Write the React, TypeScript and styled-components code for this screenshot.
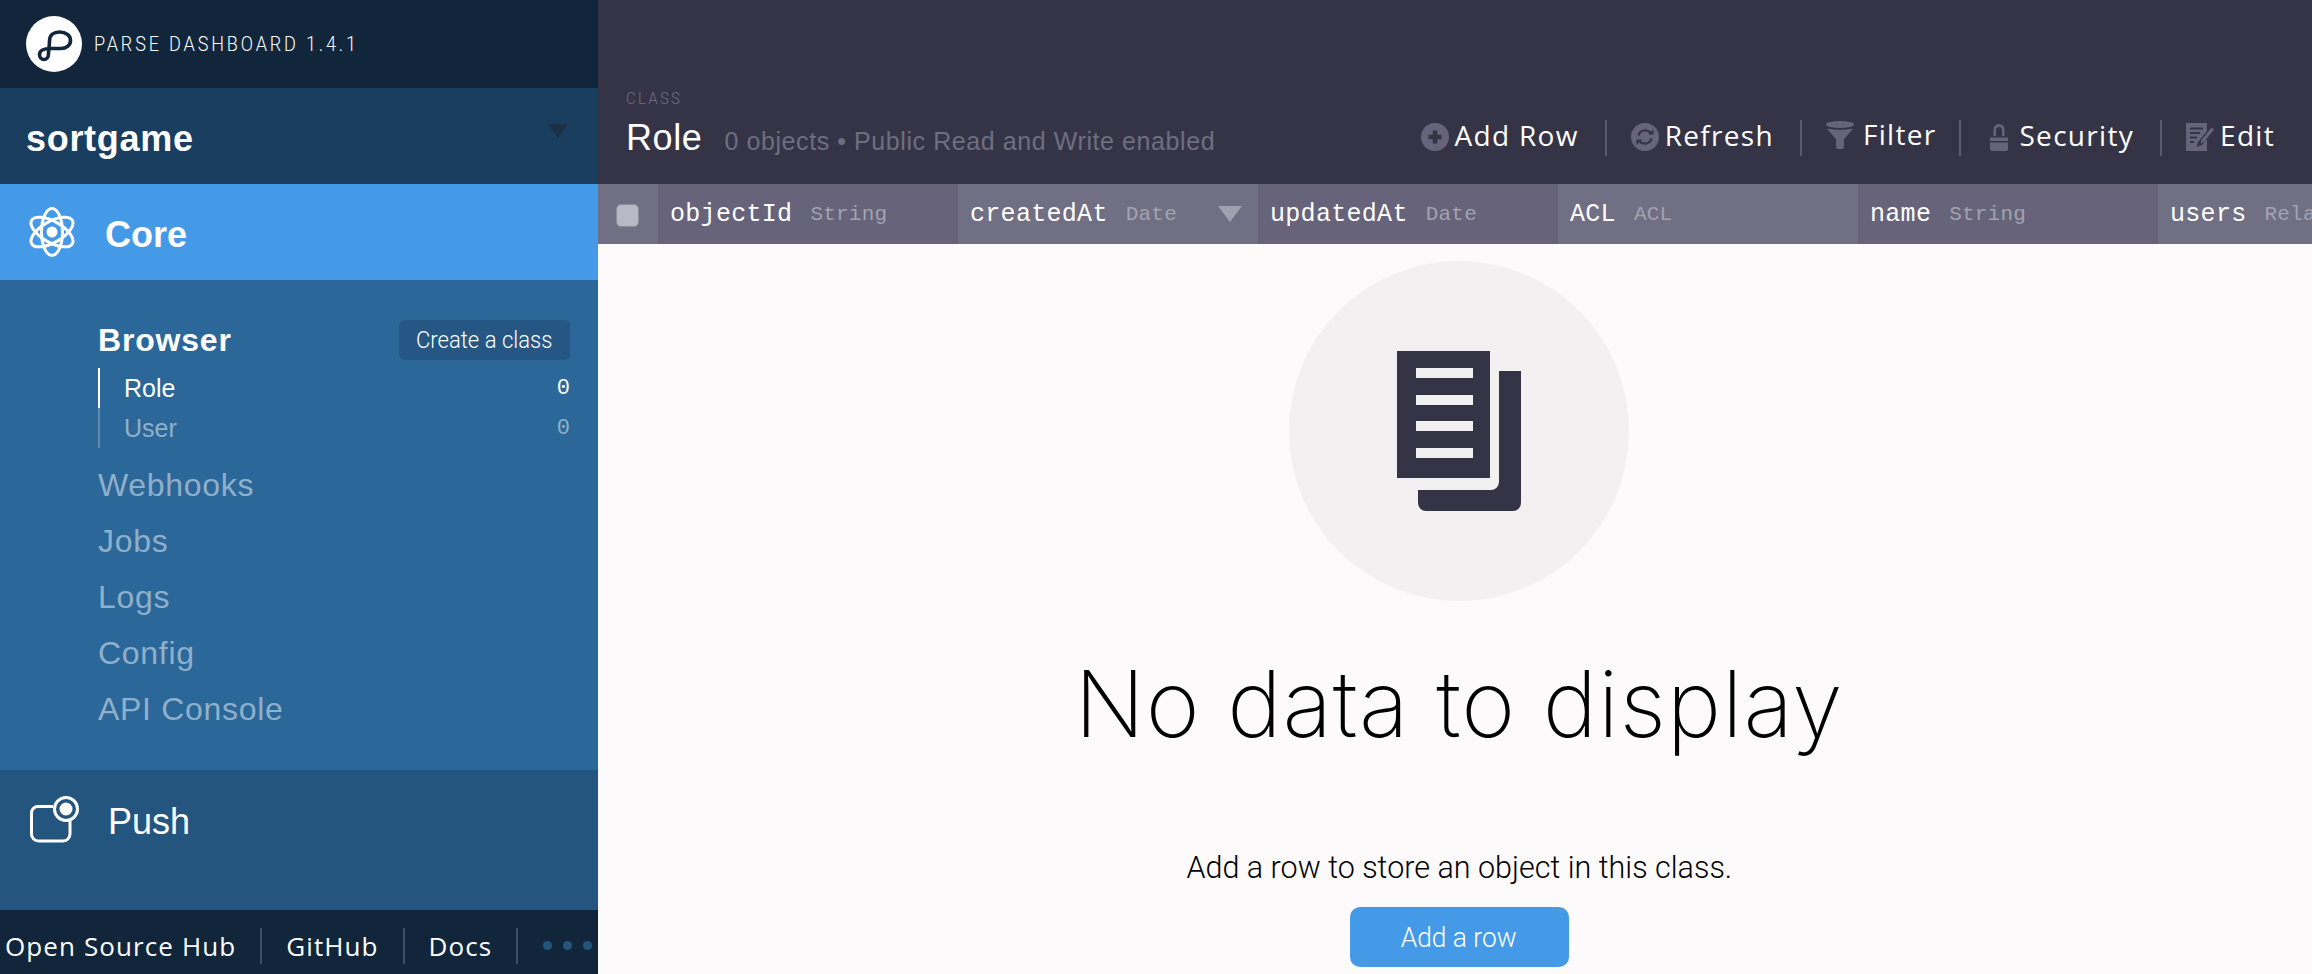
import React from 'react'
import styled, { createGlobalStyle } from 'styled-components'

const GlobalStyle = createGlobalStyle`
  html, body {
    margin: 0;
    padding: 0;
    height: 100%;
    overflow: hidden;
    background: #fcfafb;
  }
  * { box-sizing: border-box; }
`

const sans = `"Liberation Sans", Arial, sans-serif`
const din = `Roboto, "Liberation Sans", sans-serif`
const open = `"Open Sans", "Noto Sans", sans-serif`
const mono = `"Liberation Mono", monospace`

const Page = styled.div`
  display: flex;
  width: 2312px;
  height: 974px;
  overflow: hidden;
`

const Sidebar = styled.aside`
  width: 598px;
  flex-shrink: 0;
  display: flex;
  flex-direction: column;
  font-family: ${sans};
  color: #fff;
`

// the dashboard's DIN is narrower than anything installed
const Narrow = styled.span<{ $x: number; $origin?: string }>`
  display: inline-block;
  white-space: nowrap;
  transform: scaleX(${(p) => p.$x});
  transform-origin: ${(p) => p.$origin || 'center'};
`

const Brand = styled.div`
  height: 88px;
  background: #11263a;
  display: flex;
  align-items: center;
  padding: 0 0 0 26px;
  gap: 12px;
`

const BrandText = styled(Narrow)`
  font-family: ${din};
  font-weight: 300;
  font-size: 21px;
  letter-spacing: 3.3px;
`

const AppBar = styled.div`
  height: 96px;
  background: #1a3e60;
  display: flex;
  align-items: center;
  justify-content: space-between;
  padding: 0 30px 0 26px;
`

const AppName = styled.span`
  font-size: 36px;
  font-weight: 700;
  letter-spacing: 0.7px;
  padding-top: 5px;
`

const Caret = styled.div`
  width: 0;
  height: 0;
  border-left: 10px solid transparent;
  border-right: 10px solid transparent;
  border-top: 14px solid #1c3044;
  margin-bottom: 10px;
`

const Section = styled.div<{ $bg: string; $h: number }>`
  height: ${(p) => p.$h}px;
  background: ${(p) => p.$bg};
  display: flex;
  align-items: center;
  gap: 30px;
  padding-left: 29px;
  font-size: 36px;
`

const PushSection = styled(Section)`
  align-items: flex-start;
  gap: 28px;
  padding: 25px 0 0 30px;
`

const PushLabel = styled.span`
  margin-top: 6px;
`

const CoreLabel = styled.span`
  font-weight: 700;
  margin-top: 6px;
`

const SubMenu = styled.div`
  height: 490px;
  background: #2c6799;
  padding: 40px 28px 0 98px;
`

const SubHead = styled.div`
  display: flex;
  align-items: center;
  justify-content: space-between;
  height: 40px;
  margin-bottom: 8px;
`

const SubTitle = styled.span`
  font-size: 32px;
  font-weight: 700;
  letter-spacing: 0.8px;
`

const CreateButton = styled.button`
  width: 171px;
  height: 40px;
  border: 0;
  border-radius: 6px;
  background: #255684;
  color: #fff;
  font-family: ${din};
  font-weight: 300;
  font-size: 24px;
  padding: 0;
`

const ClassRow = styled.div<{ $active?: boolean }>`
  display: flex;
  justify-content: space-between;
  align-items: center;
  height: 40px;
  padding: 0 0 0 24px;
  font-size: 25px;
  border-left: 2px solid ${(p) => (p.$active ? '#fff' : '#5f8cb2')};
  color: ${(p) => (p.$active ? '#fff' : '#8fb0ca')};
`

const Count = styled.span`
  font-family: ${mono};
  font-size: 22px;
`

const NavList = styled.div`
  margin-top: 9px;
`

const NavLink = styled.div`
  height: 56px;
  line-height: 56px;
  font-size: 32px;
  letter-spacing: 0.7px;
  color: #8fb0ca;
`

const Footer = styled.div`
  height: 64px;
  background: #11263a;
  display: flex;
  align-items: center;
  padding: 7px 0 0 5px;
  font-family: ${open};
  font-size: 26px;
  letter-spacing: 1.1px;
`

const FooterLink = styled.span`
  height: 36px;
  line-height: 36px;
  padding: 0 24px 0 24px;
  border-right: 2px solid #3d4e5e;
  flex-shrink: 0;

  &:first-child {
    padding-left: 0;
  }
`

const Dots = styled.div`
  display: flex;
  gap: 11px;
  margin-left: 25px;
`

const Dot = styled.i`
  width: 9px;
  height: 9px;
  border-radius: 50%;
  background: #24557f;
`

const Main = styled.main`
  flex: 1;
  min-width: 0;
  display: flex;
  flex-direction: column;
`

const Toolbar = styled.header`
  height: 184px;
  flex-shrink: 0;
  background: #353446;
  display: flex;
  justify-content: space-between;
  align-items: flex-end;
  padding: 0 37px 0 28px;
`

const TitleBlock = styled.div`
  padding-bottom: 25px;
`

const Eyebrow = styled(Narrow)`
  display: block;
  font-family: ${din};
  font-weight: 300;
  font-size: 17px;
  letter-spacing: 2.6px;
  color: #6f6e80;
  margin-bottom: 9px;
`

const TitleRow = styled.div`
  display: flex;
  align-items: baseline;
  gap: 22px;
  font-family: ${sans};
`

const ClassName = styled.span`
  font-size: 36px;
  letter-spacing: 0.6px;
  color: #fff;
`

const ClassInfo = styled.span`
  font-size: 25px;
  letter-spacing: 0.58px;
  color: #6f6e80;
`

const Actions = styled.div`
  display: flex;
  align-items: center;
  padding-bottom: 28px;
`

const Action = styled.div`
  display: flex;
  align-items: center;
  height: 36px;
  gap: 6px;
  padding: 0 26px 0 24px;
  border-right: 2px solid #5c5a70;
  font-family: ${open};
  font-size: 28px;
  letter-spacing: 1.3px;
  color: #fff;

  &:last-child {
    border-right: 0;
    padding-right: 0;
  }
`

const ActionIcon = styled.span<{ $raised?: boolean }>`
  display: flex;
  margin-top: ${(p) => (p.$raised ? '-7px' : '-3px')};
`

const ActionLabel = styled.span<{ $raised?: boolean }>`
  margin: ${(p) => (p.$raised ? '-9px -3px 0 3px' : '-6px 0 0')};
`

const HeaderRow = styled.div`
  height: 60px;
  flex-shrink: 0;
  display: flex;
  overflow: hidden;
  font-family: ${mono};
`

const CheckCell = styled.div`
  width: 60px;
  flex-shrink: 0;
  background: #716f84;
  display: flex;
  align-items: center;
  justify-content: center;
  padding-right: 2px;
`

const Checkbox = styled.div`
  width: 23px;
  height: 23px;
  margin-top: 2px;
  border-radius: 5px;
  background: #b9b8c5;
  border: 1px solid #8d8c9b;
`

const Column = styled.div<{ $alt?: boolean }>`
  width: 300px;
  flex-shrink: 0;
  display: flex;
  align-items: center;
  gap: 18px;
  padding: 0 16px 0 12px;
  background: ${(p) => (p.$alt ? '#716f84' : '#66637a')};
  white-space: nowrap;
`

const ColumnName = styled.span`
  font-size: 25px;
  letter-spacing: 0.3px;
  color: #fff;
`

const ColumnType = styled.span`
  font-size: 21px;
  letter-spacing: 0.2px;
  color: #a3a2b0;
`

const SortCaret = styled.div`
  width: 0;
  height: 0;
  margin-left: auto;
  border-left: 12px solid transparent;
  border-right: 12px solid transparent;
  border-top: 16px solid #a0a0ae;
`

const Empty = styled.section`
  flex: 1;
  background: #fcfafb;
  display: flex;
  flex-direction: column;
  align-items: center;
  padding: 17px 0 0 8px;
`

const EmptyCircle = styled.div`
  width: 340px;
  height: 340px;
  border-radius: 50%;
  background: #f2f0f1;
  display: flex;
  align-items: center;
  justify-content: center;
`

const EmptyTitle = styled.h1`
  margin: 48px 0 0;
  font-family: "Inter", ${sans};
  font-weight: 200;
  font-size: 92px;
  line-height: 110px;
  letter-spacing: 0.85px;
  color: #000;
  white-space: nowrap;
`

const EmptyText = styled.p`
  margin: 88px 0 0;
  font-family: ${din};
  font-weight: 300;
  font-size: 32px;
  line-height: 40px;
  color: #000;
`

const AddButton = styled.button`
  width: 219px;
  height: 60px;
  margin-top: 20px;
  border: 0;
  border-radius: 10px;
  background: #459ae8;
  color: #fff;
  font-family: ${din};
  font-weight: 300;
  font-size: 28px;
  padding: 0;
`

const LogoIcon = () => (
  <svg width="56" height="56" viewBox="0 0 56 56">
    <circle cx="28" cy="28" r="28" fill="#fff" />
    <path
      d="M22.5 38C22.5 34 23.5 29 23.5 25C23.5 19 28 16 33.5 16C40 16 44.5 19.5 44.5 24.5C44.5 29.5 40 32.5 35 32.5H24C18 32.5 13.5 34.5 13.5 38.5C13.5 41.5 15.5 43.5 18 43.5C20.5 43.5 22.5 41 22.5 38"
      fill="none"
      stroke="#11263a"
      strokeWidth="3.6"
      strokeLinecap="round"
    />
  </svg>
)

const AtomIcon = () => (
  <svg width="46" height="50" viewBox="-23 -25 46 50" fill="none" stroke="#fff" strokeWidth="3">
    <ellipse rx="10.5" ry="23.5" />
    <ellipse rx="10.5" ry="23.5" transform="rotate(60)" />
    <ellipse rx="10.5" ry="23.5" transform="rotate(120)" />
    <circle r="5.5" fill="#fff" stroke="none" />
  </svg>
)

const PushIcon = () => (
  <svg width="50" height="48" viewBox="0 0 50 48" fill="none" stroke="#fff" strokeWidth="3">
    <path d="M23 11.5H8A6.5 6.5 0 0 0 1.5 18V39A7 7 0 0 0 8.500 46H33A7 7 0 0 0 40 39V26" />
    <circle cx="36" cy="14" r="11.500" />
    <circle cx="36" cy="14" r="6.500" fill="#fff" stroke="none" />
  </svg>
)

const PlusIcon = () => (
  <svg width="28" height="28" viewBox="0 0 28 28">
    <circle cx="14" cy="14" r="14" fill="#66637a" />
    <path d="M14 7.500V20.500M7.500 14H20.500" stroke="#353446" strokeWidth="4.500" />
  </svg>
)

const RefreshIcon = () => (
  <svg width="28" height="28" viewBox="0 0 28 28">
    <circle cx="14" cy="14" r="14" fill="#66637a" />
    <path d="M7.500 12.500A6.800 6.800 0 0 1 19.500 10M20.500 15.500A6.800 6.800 0 0 1 8.500 18" fill="none" stroke="#353446" strokeWidth="2.200" />
    <path d="M17 11.500H22.500V6ZM11 16.500H5.500V22Z" fill="#353446" />
  </svg>
)

const FunnelIcon = () => (
  <svg width="28" height="28" viewBox="0 0 28 28" fill="#66637a">
    <ellipse cx="14" cy="3.500" rx="14" ry="3.500" />
    <path d="M1 7.500Q14 10 27 7.500L18 18.500V26Q18 28 14 28Q10 28 10 26V18.500Z" />
  </svg>
)

const LockIcon = () => (
  <svg width="28" height="28" viewBox="0 0 28 28" fill="#66637a">
    <path d="M8.500 13V6.500A5.500 5.500 0 0 1 19.500 6.500V13H17V7A3 3 0 0 0 11 7V13Z" />
    <path d="M5 14.500H23V18H5Z" />
    <path d="M5 19.500H23V25.500A2.500 2.500 0 0 1 20.500 28H7.500A2.500 2.500 0 0 1 5 25.500Z" />
  </svg>
)

const EditIcon = () => (
  <svg width="28" height="28" viewBox="0 0 28 28" fill="#66637a">
    <path d="M0 0H21V8L12 19L10.500 24L16 22L21 16V28H0Z" />
    <path d="M15.500 17L25.500 4.500L28 6.500L18 19L14.500 20.500Z" />
    <path d="M4 5.500H17M4 10H14M4 14.500H11M4 19H8" stroke="#353446" strokeWidth="2.200" />
  </svg>
)

const DocumentsIcon = () => (
  <svg width="124" height="160" viewBox="0 0 124 160" fill="#353446">
    <path
      fillRule="evenodd"
      d="M0 0H93V127H0ZM19 17V27H76V17ZM19 44V54H76V44ZM19 70V80H76V70ZM19 97V107H76V97Z"
    />
    <path d="M102 20H124V152A8 8 0 0 1 116 160H29A8 8 0 0 1 21 152V139H94A8 8 0 0 0 102 131Z" />
  </svg>
)

const columns = [
  { name: 'objectId', type: 'String' },
  { name: 'createdAt', type: 'Date', sorted: true },
  { name: 'updatedAt', type: 'Date' },
  { name: 'ACL', type: 'ACL' },
  { name: 'name', type: 'String' },
  { name: 'users', type: 'Relation' },
]

const navLinks = ['Webhooks', 'Jobs', 'Logs', 'Config', 'API Console']

export default function App() {
  return (
    <Page>
      <GlobalStyle />
      <Sidebar>
        <Brand>
          <LogoIcon />
          <BrandText $x={0.86} $origin="left">PARSE DASHBOARD 1.4.1</BrandText>
        </Brand>
        <AppBar>
          <AppName>sortgame</AppName>
          <Caret />
        </AppBar>
        <Section $bg="#459ae8" $h={96}>
          <AtomIcon />
          <CoreLabel>Core</CoreLabel>
        </Section>
        <SubMenu>
          <SubHead>
            <SubTitle>Browser</SubTitle>
            <CreateButton>
              <Narrow $x={0.92}>Create a class</Narrow>
            </CreateButton>
          </SubHead>
          <ClassRow $active>
            <span>Role</span>
            <Count>0</Count>
          </ClassRow>
          <ClassRow>
            <span>User</span>
            <Count>0</Count>
          </ClassRow>
          <NavList>
            {navLinks.map((link) => (
              <NavLink key={link}>{link}</NavLink>
            ))}
          </NavList>
        </SubMenu>
        <PushSection $bg="#24557f" $h={140}>
          <PushIcon />
          <PushLabel>Push</PushLabel>
        </PushSection>
        <Footer>
          <FooterLink>Open Source Hub</FooterLink>
          <FooterLink>GitHub</FooterLink>
          <FooterLink>Docs</FooterLink>
          <Dots>
            <Dot />
            <Dot />
            <Dot />
          </Dots>
        </Footer>
      </Sidebar>
      <Main>
        <Toolbar>
          <TitleBlock>
            <Eyebrow $x={0.88} $origin="left">CLASS</Eyebrow>
            <TitleRow>
              <ClassName>Role</ClassName>
              <ClassInfo>0 objects • Public Read and Write enabled</ClassInfo>
            </TitleRow>
          </TitleBlock>
          <Actions>
            <Action>
              <ActionIcon><PlusIcon /></ActionIcon>
              <ActionLabel>Add Row</ActionLabel>
            </Action>
            <Action>
              <ActionIcon><RefreshIcon /></ActionIcon>
              <ActionLabel>Refresh</ActionLabel>
            </Action>
            <Action>
              <ActionIcon $raised><FunnelIcon /></ActionIcon>
              <ActionLabel $raised>Filter</ActionLabel>
            </Action>
            <Action>
              <ActionIcon><LockIcon /></ActionIcon>
              <ActionLabel>Security</ActionLabel>
            </Action>
            <Action>
              <ActionIcon><EditIcon /></ActionIcon>
              <ActionLabel>Edit</ActionLabel>
            </Action>
          </Actions>
        </Toolbar>
        <HeaderRow>
          <CheckCell>
            <Checkbox />
          </CheckCell>
          {columns.map((col, i) => (
            <Column key={col.name} $alt={i % 2 === 1}>
              <ColumnName>{col.name}</ColumnName>
              <ColumnType>{col.type}</ColumnType>
              {col.sorted && <SortCaret />}
            </Column>
          ))}
        </HeaderRow>
        <Empty>
          <EmptyCircle>
            <DocumentsIcon />
          </EmptyCircle>
          <EmptyTitle>No data to display</EmptyTitle>
          <EmptyText>
            <Narrow $x={0.953}>Add a row to store an object in this class.</Narrow>
          </EmptyText>
          <AddButton>
            <Narrow $x={0.94}>Add a row</Narrow>
          </AddButton>
        </Empty>
      </Main>
    </Page>
  )
}
